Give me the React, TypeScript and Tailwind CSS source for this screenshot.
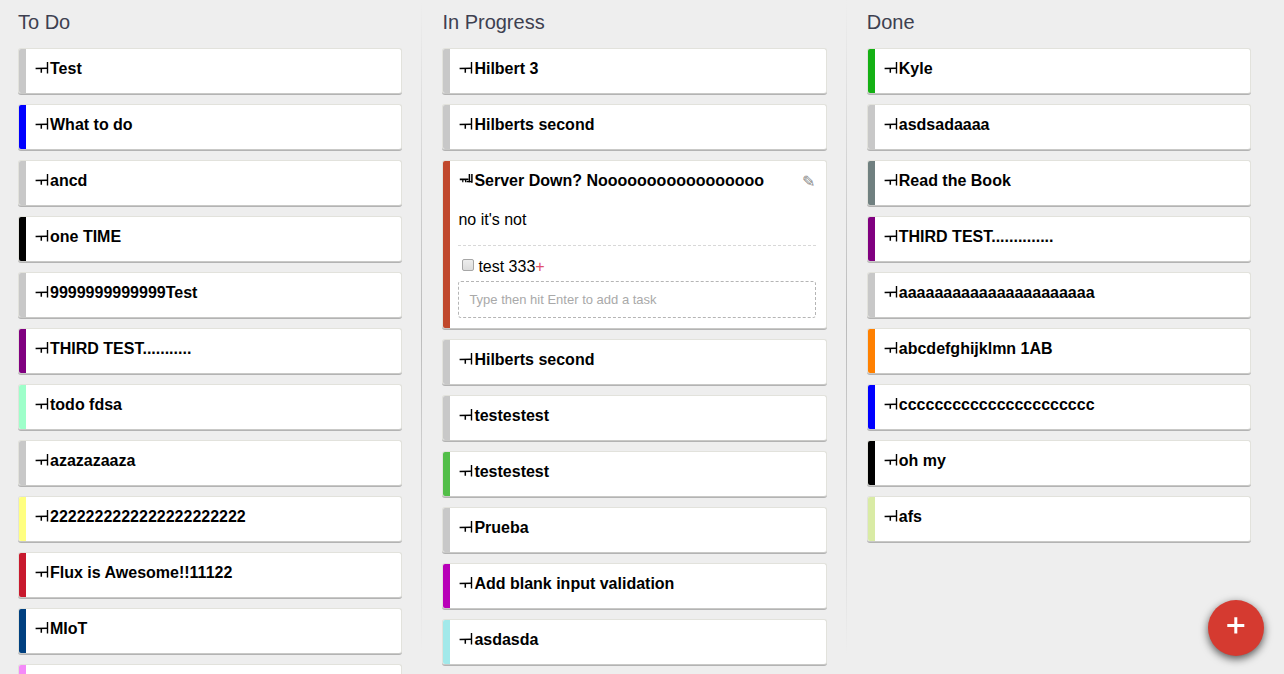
import React from "react";

type Card = { title: string; bar: string };

const todo: Card[] = [
  { title: "Test", bar: "bg-[#c8c8c8]" },
  { title: "What to do", bar: "bg-[#0000ff]" },
  { title: "ancd", bar: "bg-[#c8c8c8]" },
  { title: "one TIME", bar: "bg-black" },
  { title: "9999999999999Test", bar: "bg-[#c8c8c8]" },
  { title: "THIRD TEST...........", bar: "bg-[#800080]" },
  { title: "todo fdsa", bar: "bg-[#9effca]" },
  { title: "azazazaaza", bar: "bg-[#c8c8c8]" },
  { title: "2222222222222222222222", bar: "bg-[#ffff80]" },
  { title: "Flux is Awesome!!11122", bar: "bg-[#c8192e]" },
  { title: "MIoT", bar: "bg-[#004080]" },
  { title: "", bar: "bg-[#f48af8]" },
];

const progressTop: Card[] = [
  { title: "Hilbert 3", bar: "bg-[#c8c8c8]" },
  { title: "Hilberts second", bar: "bg-[#c8c8c8]" },
];

const progressBottom: Card[] = [
  { title: "Hilberts second", bar: "bg-[#c8c8c8]" },
  { title: "testestest", bar: "bg-[#c8c8c8]" },
  { title: "testestest", bar: "bg-[#52be48]" },
  { title: "Prueba", bar: "bg-[#c8c8c8]" },
  { title: "Add blank input validation", bar: "bg-[#b800b8]" },
  { title: "asdasda", bar: "bg-[#a2e9ea]" },
];

const done: Card[] = [
  { title: "Kyle", bar: "bg-[#14b014]" },
  { title: "asdsadaaaa", bar: "bg-[#c8c8c8]" },
  { title: "Read the Book", bar: "bg-[#708080]" },
  { title: "THIRD TEST..............", bar: "bg-[#800080]" },
  { title: "aaaaaaaaaaaaaaaaaaaaaa", bar: "bg-[#c8c8c8]" },
  { title: "abcdefghijklmn 1AB", bar: "bg-[#ff8000]" },
  { title: "cccccccccccccccccccccc", bar: "bg-[#0000ff]" },
  { title: "oh my", bar: "bg-black" },
  { title: "afs", bar: "bg-[#d9eba5]" },
];

function Handle({ open = false }: { open?: boolean }) {
  return (
    <svg className="block h-[14px] w-[15px] shrink-0" viewBox="0 0 15 14" fill="none" stroke="#000">
      {open ? (
        <>
          <path d="M0.8 5.4H9.5" strokeWidth="1.8" />
          <path d="M3.8 6V8.3M6.6 6V8.3" strokeWidth="1.2" />
          <path d="M10.4 0V8.3M12.9 0V8.7" strokeWidth="1.5" />
          <path d="M7.5 7.6H13" strokeWidth="1.4" />
        </>
      ) : (
        <>
          <path d="M0.6 6.5L12.5 6.2" strokeWidth="1.5" />
          <path d="M6.3 6.5V10.8" strokeWidth="1.5" />
          <path d="M12.5 0V11.6" strokeWidth="1.4" />
        </>
      )}
    </svg>
  );
}

function Frame({ bar, children, className }: { bar: string; children: React.ReactNode; className: string }) {
  return (
    <article
      className={`flex overflow-hidden rounded-[3px] border border-[#e2e2dc] border-b-[#c9c9c7] bg-white shadow-[0_1px_0_#b3b3b3] ${className}`}
    >
      <div className={`w-[7px] shrink-0 ${bar}`} />
      <div className="min-w-0 flex-1">{children}</div>
    </article>
  );
}

function Title({ title, open }: { title: string; open?: boolean }) {
  return (
    <h3 className="flex h-5 items-center text-base leading-5 font-bold whitespace-nowrap">
      <Handle open={open} />
      {title}
    </h3>
  );
}

function SimpleCard({ card }: { card: Card }) {
  return (
    <Frame bar={card.bar} className="h-[46px] shrink-0">
      <div className="pt-[10px] pl-[9px]">
        <Title title={card.title} />
      </div>
    </Frame>
  );
}

function OpenCard() {
  return (
    <Frame bar="bg-[#c0482c]" className="h-[169px] shrink-0">
      <div className="flex h-[31px] justify-between pt-[10px] pr-[10.5px] pl-[9px]">
        <Title title="Server Down? Nooooooooooooooooo" open />
        <span className="font-['DejaVu_Sans',sans-serif] text-base leading-[22px] text-[#888]">✎</span>
      </div>
      <div className="mr-[10px] ml-2">
        <p className="mt-[18px] h-9 border-b border-dashed border-[#d8d8d8] text-base leading-5">no it's not</p>
        <div className="mt-[10px] flex h-[21px] items-center text-base leading-5">
          <span className="mr-[4.6px] mb-[3px] ml-[3.4px] h-3 w-3 rounded-[2px] border border-[#a6a6a6] bg-linear-to-b from-[#ededed] to-[#dcdcdc]" />
          test 333<span className="text-[#e0506a]">+</span>
        </div>
        <input
          className="mt-1 block h-[37px] w-full rounded-[3px] border border-dashed border-[#b5b5b5] px-[10px] text-[13px] outline-none placeholder:text-[#a9a9a9]"
          placeholder="Type then hit Enter to add a task"
        />
      </div>
    </Frame>
  );
}

function Column({ name, children }: { name: string; children: React.ReactNode }) {
  return (
    <section className="w-[384.4px] shrink-0">
      <h2 className="h-12 pt-2 text-xl leading-7 text-[#3d4050]">{name}</h2>
      <div className="flex flex-col gap-[10px]">{children}</div>
    </section>
  );
}

function Divider() {
  return <div className="mr-5 ml-[19px] h-[654px] w-px shrink-0 bg-linear-to-b from-[#eee] via-[#bbb] to-[#eee]" />;
}

export default function App() {
  return (
    <main className="relative flex h-[674px] w-[1284px] overflow-hidden bg-[#eee] pl-[18px] font-['Liberation_Sans',Arial,sans-serif] text-black">
      <Column name="To Do">
        {todo.map((card, i) => (
          <SimpleCard key={i} card={card} />
        ))}
      </Column>
      <Divider />
      <Column name="In Progress">
        {progressTop.map((card, i) => (
          <SimpleCard key={i} card={card} />
        ))}
        <OpenCard />
        {progressBottom.map((card, i) => (
          <SimpleCard key={i} card={card} />
        ))}
      </Column>
      <Divider />
      <Column name="Done">
        {done.map((card, i) => (
          <SimpleCard key={i} card={card} />
        ))}
      </Column>
      <button
        aria-label="Add card"
        className="absolute right-5 bottom-[18px] flex h-14 w-14 items-center justify-center rounded-full bg-[#d53a30] shadow-[0_3px_8px_rgba(0,0,0,0.65)]"
      >
        <svg className="mb-[5px] h-[18px] w-[18px]" viewBox="0 0 18 18" stroke="white" strokeWidth="3">
          <path d="M0.3 8.5H17.3M8.8 0.2V16.5" />
        </svg>
      </button>
    </main>
  );
}
